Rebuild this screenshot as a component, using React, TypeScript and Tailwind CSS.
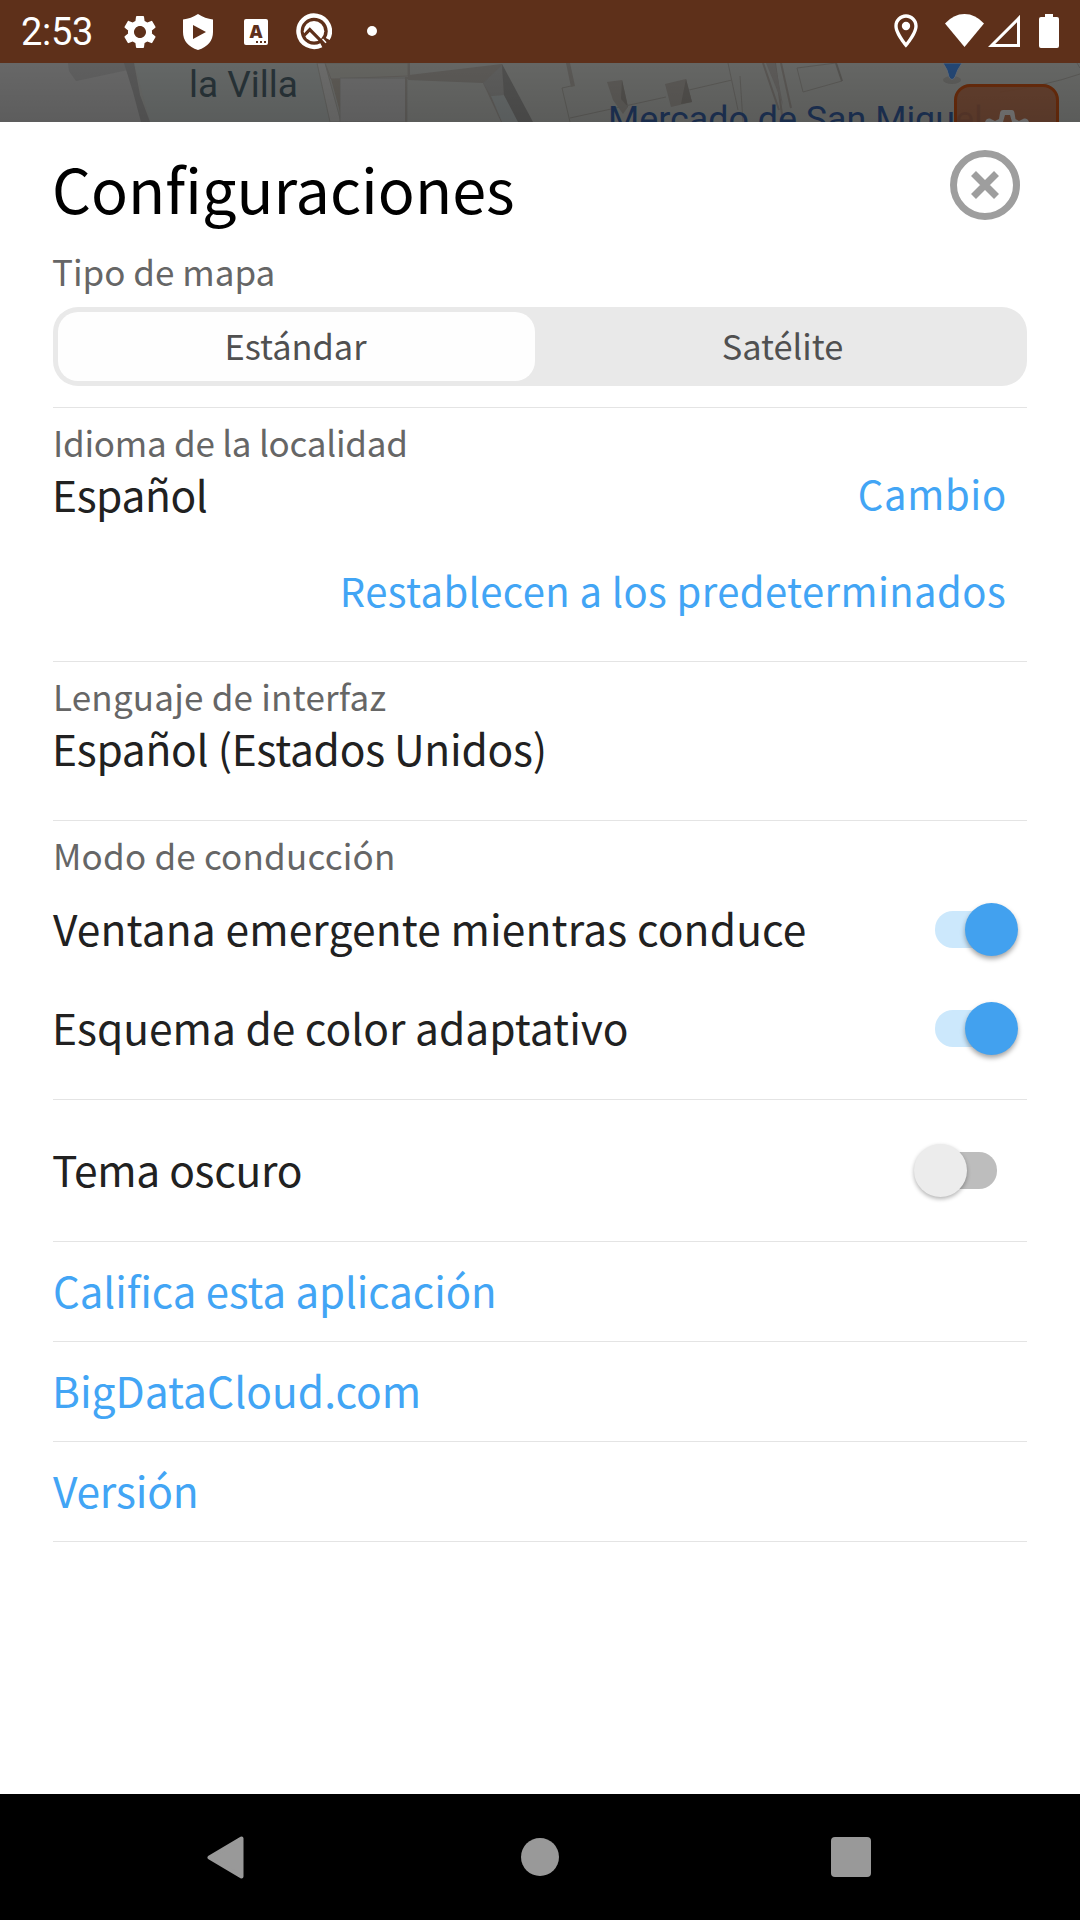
import type { ReactNode } from "react";
import { MdOutlineLocationOn, MdSettings } from "react-icons/md";

function StatusBar() {
  return (
    <header className="flex h-[63px] shrink-0 items-start bg-[#5e301a] text-white">
      <span className="ml-[21px] w-[74px] font-['Roboto',sans-serif] text-[38px] leading-[65px] tracking-[-0.3px]">2:53</span>
      <MdSettings className="mt-3 ml-[25px] size-10 shrink-0" />
      <svg className="mt-[14px] ml-[23px] h-9 w-[30px] shrink-0" viewBox="0 0 30 36" fill="currentColor">
        <path fillRule="evenodd" d="M15 0 Q22 4.500 30 5.500 V18 Q30 31 15 36 Q0 31 0 18 V5.500 Q8 4.500 15 0Z M10 11 V25 L23 18Z" />
      </svg>
      <span className="relative mt-[19px] ml-[31px] flex h-[26px] w-6 shrink-0 justify-center rounded-[2px] bg-white font-['Open_Sans',sans-serif] text-[18px] leading-[25px] font-extrabold text-[#5e301a]">
        A
        <i className="absolute right-[2px] bottom-[2px] flex gap-[2px]">
          <b className="size-[2px] bg-[#5e301a]" />
          <b className="size-[2px] bg-[#5e301a]" />
          <b className="size-[2px] bg-[#5e301a]" />
        </i>
      </span>
      <svg className="mt-[13px] ml-[28px] h-[38px] w-9 shrink-0" viewBox="0 0 36 38" fill="none">
        <path d="M25.300 32.200 A15.700 15.700 0 1 1 31.800 26" stroke="currentColor" strokeWidth="4.400" />
        <circle cx="18" cy="18.300" r="10.300" fill="currentColor" />
        <path d="M8 22.500 L13.800 16.600 L30.500 33.500" stroke="#5e301a" strokeWidth="3.200" />
        <path d="M26.500 26 L30 29.700" stroke="currentColor" strokeWidth="1.500" />
      </svg>
      <span className="mt-[26px] ml-[35px] size-[10px] rounded-full bg-white" />
      <MdOutlineLocationOn className="mt-[11px] ml-auto size-10 shrink-0" />
      <svg className="mt-[14px] ml-[19px] h-[33px] w-[39px] shrink-0" viewBox="0 0 39 33" fill="currentColor">
        <path d="M0 9.500 Q8.500 0 19.500 0 T39 9.500 L19.500 33Z" />
      </svg>
      <svg className="mt-[14px] ml-[4px] h-[33px] w-8 shrink-0" viewBox="0 0 32 33" fill="none" stroke="currentColor" strokeWidth="3">
        <path d="M30.500 4.500 V31.500 H3.600Z" />
      </svg>
      <svg className="mt-[14px] mr-[21px] ml-[19px] h-[34px] w-5 shrink-0" viewBox="0 0 20 34" fill="currentColor">
        <path d="M6 0 H14 V3 H18 Q20 3 20 5 V32 Q20 34 18 34 H2 Q0 34 0 32 V5 Q0 3 2 3 H6Z" />
      </svg>
    </header>
  );
}

function MapStrip() {
  return (
    <div className="relative h-[59px] shrink-0 overflow-hidden bg-[#656664] font-['Roboto',sans-serif]">
      <svg className="absolute inset-0 h-[59px] w-[1080px]" viewBox="0 63 1080 59" fill="none">
        <path d="M0 63 H130 L146 122 H0Z" fill="#676767" />
        <path d="M134 63 H317 L330 122 H150Z" fill="#646766" />
        <path d="M68 63 H130 L128 70 L76 81 L69 71Z" fill="#5f5f5f" />
        <path d="M124 63 H134 L140 95 L150 122 H141 L133 92Z" fill="#575757" />
        <path d="M317 63 H325 L341 122 H330Z" fill="#6b6b6a" stroke="#5d5d5a" />
        <path d="M325 63 H408 V76 L331 79Z" fill="#646460" stroke="#5d5a57" />
        <path d="M340 78 H407 V122 H340Z" fill="#676767" stroke="#5d5c5a" />
        <path d="M331 79 L340 79 V112Z" fill="#5c5954" />
        <path d="M409 75 L502 64 L520 122 H501 L483 83 L408 80Z" fill="#5b5956" />
        <path d="M483 83 L502 65 L504 95 L491 96Z" fill="#5c5c5b" />
        <path d="M491 96 L504 95 L520 122 H502Z" fill="#626666" />
        <path d="M502 64 L533 122 H518 L504 95Z" fill="#4f4f4e" />
        <path d="M406 122 V78 H409 V63" stroke="#5b5956" strokeWidth="2" />
        <path d="M566 63 H570 L575 86 L571 87Z M607 82 L622 80 L628 107 L623 114 L613 100Z M665 84 L686 79 L692 102 L671 107Z" fill="#5a5855" />
        <path d="M622 80 L628 107 L621 99Z M686 79 L692 102 L681 104Z" fill="#504e4b" />
        <path d="M562 88 L571 86 M562 88 L570 122 M570 118 L666 97 M689 90 L732 80 M728 63 L738 110" stroke="#595855" />
        <path d="M763 63 L779 110 M775 63 L783 122 M781 63 L791 108" stroke="#595653" strokeWidth="2" />
        <path d="M766 63 H775 L783 105Z" fill="#5c5a58" />
        <path d="M797 68 L836 63 L842 81 L803 92Z M740 76 L743 122 M1000 92 Q1045 86 1080 74 M1077 63 L1080 68" stroke="#595855" />
        <path d="M836 63 L842 81" stroke="#53524f" strokeWidth="2" />
        <ellipse cx="952" cy="80" rx="9" ry="4" fill="#5b5b59" />
        <path d="M943 63 H962 Q957 70 955 77 Q952 82 949 77 Q948 70 943 63Z" fill="#234673" stroke="#606873" strokeWidth="1" />
      </svg>
      <span className="absolute top-0 left-[189px] text-[37px] leading-[43px] whitespace-nowrap text-[#273237]">la Villa</span>
      <span className="absolute top-[35px] left-[608px] text-[35.8px] leading-[43px] whitespace-nowrap text-[#1c3153]">Mercado de San Miguel</span>
      <div className="absolute top-[21px] left-[954px] h-[105px] w-[105px] rounded-[16px] border-[3px] border-[#662a0b] bg-[#603a27]/90">
        <svg className="absolute top-[23px] left-[24px] h-14 w-[50px]" viewBox="0 0 50 56" fill="#747474">
          <path
            fillRule="evenodd"
            d="M19 3 Q19.500 0 22 0 H31 Q33 0 33.500 3 L34.500 9 L38 11 L43 8.500 Q46 8 47 10 L50 16 V50 H2 V16 L5 10 Q6 8 9 8.500 L14 11 L18 9Z M24 5 L22 12 L14 17 H39 L31 12 L29 5Z"
          />
        </svg>
      </div>
      <div className="absolute inset-0 bg-linear-to-b from-black/0 to-black/10" />
    </div>
  );
}

function Label({ children, className = "" }: { children: ReactNode; className?: string }) {
  return <h2 className={`flex h-[39px] items-center text-[35px] leading-none whitespace-nowrap text-[#666666] ${className}`}>{children}</h2>;
}

function Divider({ className = "" }: { className?: string }) {
  return <hr className={`h-px border-0 bg-[#e4e4e4] ${className}`} />;
}

function Switch({ on = false }: { on?: boolean }) {
  return on ? (
    <button className="relative mt-0.5 mr-[9px] ml-auto flex h-[53px] w-[83px] items-center">
      <span className="h-[37px] w-[70px] rounded-[18px] bg-[#cce8fc]" />
      <span className="absolute right-0 size-[53px] rounded-full bg-[#42a1ef] shadow-[0_3px_5px_rgba(0,0,0,0.35)]" />
    </button>
  ) : (
    <button className="relative mt-px mr-[30px] ml-auto flex h-[53px] w-[83px] items-center justify-end">
      <span className="h-[37px] w-[70px] rounded-[18px] bg-[#bdbdbd]" />
      <span className="absolute left-0 size-[53px] rounded-full bg-[#ececec] shadow-[0_2px_4px_rgba(0,0,0,0.3)]" />
    </button>
  );
}

function Settings() {
  return (
    <main className="flex h-[1672px] shrink-0 flex-col bg-white px-[53px] text-[42.5px] leading-none whitespace-nowrap text-[#212121]">
      <div className="flex h-[130px] shrink-0 items-center justify-between">
        <h1 className="-ml-px pt-[2px] text-[61.1px] leading-none text-black">Configuraciones</h1>
        <svg className="mr-[7px] mb-1 size-[70px]" viewBox="0 0 70 70" fill="none" stroke="#9e9e9e" strokeWidth="7">
          <circle cx="35" cy="35" r="31.500" />
          <path d="M23.500 23.500 L46.500 46.500 M46.500 23.500 L23.500 46.500" />
        </svg>
      </div>

      <Label className="-ml-px pb-[2px]">Tipo de mapa</Label>
      <div className="mt-4 flex h-[79px] items-stretch rounded-[25px] bg-[#e9e9e9] py-[5px] pl-[5px] text-[34.4px] text-[#505050]">
        <button className="flex w-[477px] items-center justify-center rounded-[20px] bg-[#fefefe] pr-[2px] pb-[3px]">Estándar</button>
        <button className="flex flex-1 items-center justify-center pb-[3px] pl-[3px]">Satélite</button>
      </div>
      <Divider className="mt-[21px]" />

      <section className="pt-[14px]">
        <Label className="tracking-[-0.25px]">Idioma de la localidad</Label>
        <div className="flex h-[65px] items-center justify-between">
          <span className="-ml-px pt-[2px] tracking-[-0.4px]">Español</span>
          <button className="mr-5 pb-[2px] text-[40px] leading-none tracking-[0.7px] text-[#42a5f5]">Cambio</button>
        </div>
        <div className="flex h-[127px] items-center justify-end">
          <button className="mr-[21px] text-[40px] leading-none tracking-[0.4px] text-[#42a5f5]">Restablecen a los predeterminados</button>
        </div>
      </section>
      <Divider className="mt-2" />

      <section className="pt-[14px]">
        <Label className="tracking-[0.2px]">Lenguaje de interfaz</Label>
        <div className="flex h-[65px] items-center">
          <span className="-ml-px pt-[2px] tracking-[-0.27px]">Español (Estados Unidos)</span>
        </div>
      </section>
      <Divider className="mt-10" />

      <section className="pt-[14px]">
        <Label className="tracking-[0.2px]">Modo de conducción</Label>
        <div className="mt-1 flex h-[99px] items-center pt-[2px]">
          <span className="tracking-[0.13px]">Ventana emergente mientras conduce</span>
          <Switch on />
        </div>
        <div className="flex h-[99px] items-center pt-[2px]">
          <span className="-ml-px">Esquema de color adaptativo</span>
          <Switch on />
        </div>
      </section>
      <Divider className="mt-[23px]" />

      <div className="flex h-[137px] items-center pt-[2px]">
        <span className="-ml-px tracking-[-0.3px]">Tema oscuro</span>
        <Switch />
      </div>
      <Divider className="mt-1" />

      <nav className="flex flex-col text-[#42a5f5]">
        <a className="flex h-[99px] items-center pb-1 text-[41.9px]">Califica esta aplicación</a>
        <Divider />
        <a className="-ml-px flex h-[99px] items-center pb-[2px]">BigDataCloud.com</a>
        <Divider className="shrink-0" />
        <a className="flex h-[99px] items-center pb-[2px] tracking-[-0.2px]">Versión</a>
        <Divider />
      </nav>
    </main>
  );
}

function NavBar() {
  return (
    <footer className="flex h-[126px] shrink-0 items-center bg-black">
      <svg className="ml-[207px] h-[43px] w-[37px]" viewBox="0 0 37 43" fill="#999999" stroke="#999999" strokeWidth="4" strokeLinejoin="round">
        <path d="M2.500 21.500 L34.500 2.500 V40.500Z" />
      </svg>
      <span className="ml-[277px] size-[38px] rounded-full bg-[#999999]" />
      <span className="ml-[272px] size-10 rounded-[4px] bg-[#999999]" />
    </footer>
  );
}

export default function App() {
  return (
    <div className="flex h-[1920px] w-[1080px] flex-col overflow-hidden bg-white font-['Noto_Sans_CJK_SC','Open_Sans',sans-serif]">
      <StatusBar />
      <MapStrip />
      <Settings />
      <NavBar />
    </div>
  );
}
